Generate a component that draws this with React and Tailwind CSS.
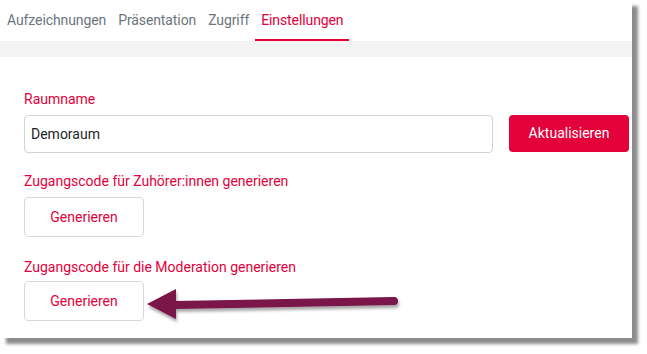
import React from 'react';

const tabs = ['Aufzeichnungen', 'Präsentation', 'Zugriff', 'Einstellungen'];

const GenerateButton = () => (
  <button className="h-[40px] w-[120px] rounded border border-[#d9d9d9] bg-white text-[14px] text-[#e4003a]">
    Generieren
  </button>
);

export default function App() {
  return (
    <div className="w-[647px] h-[354px] bg-white" style={{ fontFamily: 'Roboto, "Liberation Sans", sans-serif' }}>
      <div className="relative w-[632px] h-[338px] bg-white shadow-[6px_6px_3px_rgba(0,0,0,0.45)]">
        {/* Tabs */}
        <div className="flex h-[41px] items-stretch pl-[7px] text-[14px] tracking-[-0.1px] text-[#6c757d]">
          {tabs.map((tab) => (
            <div
              key={tab}
              className={
                tab === 'Einstellungen'
                  ? 'flex items-center px-[6px] border-b-2 border-[#e4003a] text-[#e4003a] pt-[2px]'
                  : 'flex items-center px-[6px] first:pl-0 border-b-2 border-transparent pt-[2px]'
              }
            >
              {tab}
            </div>
          ))}
        </div>

        <div className="h-[16px] bg-[#f3f3f3]" />

        {/* Card */}
        <div className="rounded-tl-[4px] bg-white pl-[24px] pr-[3px] pt-[33px]">
          <div className="text-[14px] leading-[18px] text-[#e4003a]">Raumname</div>
          <div className="mt-[7px] flex gap-[16px]">
            <input
              readOnly
              value="Demoraum"
              className="h-[38px] w-[469px] shrink-0 rounded border border-[#ced4da] px-[6px] text-[14px] text-[#212529] outline-none"
            />
            <button className="h-[37px] w-[120px] shrink-0 rounded bg-[#e4003a] text-[14px] text-white">
              Aktualisieren
            </button>
          </div>
          <div className="mt-[19px] text-[14px] leading-[18px] text-[#e4003a]">
            Zugangscode für Zuhörer:innen generieren
          </div>
          <div className="mt-[7px]">
            <GenerateButton />
          </div>
          <div className="mt-[21px] text-[14px] leading-[18px] text-[#e4003a]">
            Zugangscode für die Moderation generieren
          </div>
          <div className="mt-[5px]">
            <GenerateButton />
          </div>
        </div>

        {/* Annotation arrow */}
        <svg className="absolute left-[144px] top-[284px]" width="262" height="42" viewBox="0 0 262 42">
          <defs>
            <filter id="sh" x="-10%" y="-50%" width="120%" height="200%">
              <feDropShadow dx="1" dy="3" stdDeviation="1.5" floodColor="#000" floodOpacity="0.35" />
            </filter>
          </defs>
          <g filter="url(#sh)">
            <line x1="30" y1="21" x2="250" y2="17" stroke="#7a1249" strokeWidth="8" strokeLinecap="round" />
            <polygon points="3,20 32,5 32,35" fill="#7a1249" />
          </g>
        </svg>
      </div>
    </div>
  );
}
